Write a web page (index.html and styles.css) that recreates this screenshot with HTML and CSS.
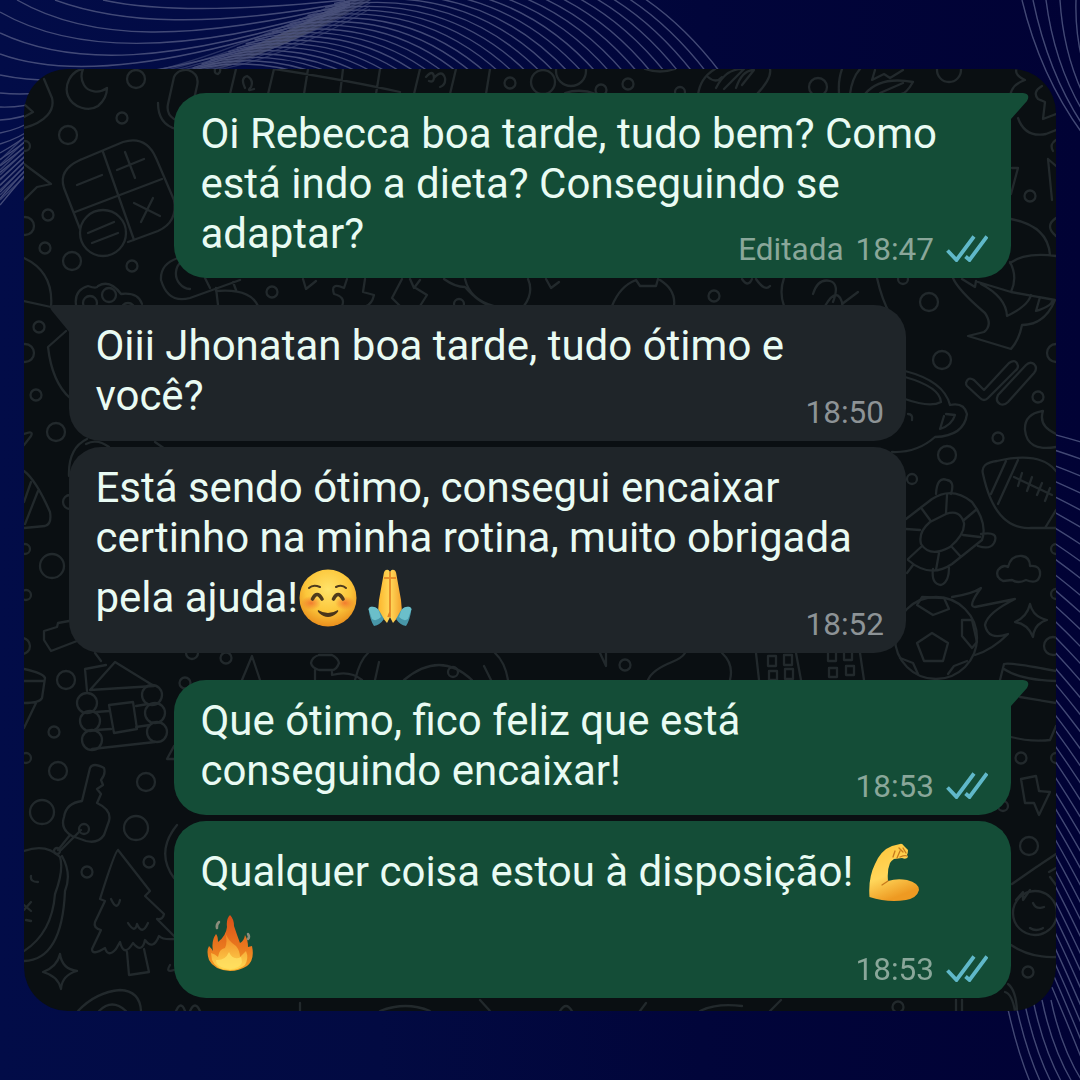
FILE: index.html
```html
<!DOCTYPE html>
<html lang="pt-BR">
<head>
<meta charset="utf-8">
<title>Conversa</title>
<link rel="stylesheet" href="styles.css">
</head>
<body>
<svg class="waves" viewBox="0 0 1080 1080" aria-hidden="true">
  <defs>
    <linearGradient id="band" x1="0" y1="1" x2="1" y2="0"><stop offset="0" stop-color="#5c6072" stop-opacity=".25"/><stop offset=".5" stop-color="#6b6f78" stop-opacity=".6"/><stop offset="1" stop-color="#6b6f78" stop-opacity=".25"/></linearGradient>
  </defs>
  <path d="M190 71L215 71Q300 42 375 -2L350 -2Q275 40 190 71Z" fill="url(#band)"/>
  <g id="wave-lines" class="wave-lines"></g>
</svg>

<main class="chat">
  <svg class="doodles" viewBox="24 69 1032 942" aria-hidden="true">
    <!-- top left: moon, clip, tag, calculator -->
    <path d="M83 69C70 71 64 86 68 96C73 108 89 112 98 106C104 101 107 94 107 88C99 94 88 92 84 85C81 80 81 74 83 69ZM44 79L52 98C55 110 46 122 24 128M24 104L33 112L24 117"/>
    <circle cx="136" cy="79" r="9"/><circle cx="122" cy="118" r="5.5"/><circle cx="68" cy="135" r="9"/><circle cx="25" cy="146" r="5"/><circle cx="48" cy="215" r="5.5"/><circle cx="25" cy="226" r="9"/><circle cx="45" cy="248" r="5.5"/><circle cx="72" cy="261" r="9"/><circle cx="132" cy="266" r="5.5"/>
    <path d="M174 77Q178 69 188 70Q200 74 197 86L191 113Q186 124 174 119Q166 114 168 104L174 77M158 103Q158 124 176 129M24 164L51 184L37 187L24 200"/>
    <path d="M80 160L123 142Q146 135 156 158L174 200Q178 222 158 231L128 242M80 160Q58 170 64 188L80 229M103 152L134 240M75 212L162 179M125 152L135 178M117 170L144 159M77 185L102 175M134 203L160 216M153 198L141 222M88 233L114 222M92 243L118 233"/><circle cx="103" cy="233" r="23"/>
    <!-- calendar strip -->
    <path d="M236 69L230 94M274 69L268 94M308 69L304 94M343 69L340 94M380 69L376 94M420 69L414 94M456 69L450 94M490 69L486 94M275 69C320 76 360 83 400 92M215 69Q214 74 218 74Q221 72 220 69"/>
    <path d="M245 88Q240 78 247 76Q254 80 251 87Q246 92 254 89M426 77Q433 69 434 77Q434 83 429 81M434 78Q442 69 445 78Q446 85 440 87"/>
    <circle cx="510" cy="83" r="5.5"/><circle cx="543" cy="82" r="12"/><circle cx="571" cy="71" r="15"/><circle cx="628" cy="84" r="5.5"/><circle cx="601" cy="90" r="5.5"/><circle cx="680" cy="92" r="5"/>
    <path d="M565 93Q580 88 596 94M645 69Q660 74 675 69M698 95Q700 78 715 69M708 77Q716 84 722 77M716 88Q726 68 744 69L724 89M736 88Q742 70 754 70L742 85M757 94Q772 78 770 69"/>
    <circle cx="818" cy="87" r="9"/><circle cx="949" cy="70" r="12"/><path d="M839 93Q838 80 842 69M850 94Q852 78 860 69M865 94Q880 76 913 82Q906 94 901 94M875 70L872 80L884 74L890 78L903 70M880 93L903 83"/>
    <path d="M1010 96Q1012 84 1025 80Q1012 74 1018 66M1018 118Q1025 138 1046 134L1056 130M1042 86Q1032 92 1038 99L1045 102L1043 119L1056 114"/>
    <!-- right upper: dolphin -->
    <path d="M1012 168L1018 168L1011 194M1048 159L1056 166M1048 159L1052 200M1056 140Q1049 144 1053 151M1056 218Q1044 226 1056 236"/><circle cx="1030" cy="196" r="5.5"/>
    <path d="M1011 219Q1048 226 1050 255M1010 263Q1025 252 1056 256M1010 262Q1018 277 1011 292L978 282M953 278Q958 290 985 313Q993 325 984 332L968 336L1011 349Q1019 340 1022 325Q1045 325 1055 300L1011 292M962 279L975 287L976 281M981 284Q1006 297 1007 316Q1028 306 1031 295M1040 297L1036 311Q1052 306 1052 301"/>
    <!-- strip under the first message -->
    <path d="M24 258Q54 272 51 307L24 301M76 305Q74 290 88 286Q97 289 98 286Q110 279 121 294Q138 292 142 304"/><circle cx="90" cy="303" r="7"/><circle cx="109" cy="295" r="7"/><circle cx="128" cy="310" r="7"/>
    <path d="M178 258Q160 264 161 280Q168 304 190 298L240 280M205 278L210 288M193 258A13 13 0 1 0 190 289M216 288L218 305M216 291Q250 288 258 306M233 282L236 290M303 279L306 289L316 281M347 279L344 288Q330 282 334 294Q346 297 342 306M365 279L363 292L374 295Q372 304 366 306M402 279L392 298L400 306M414 287L427 295L420 306M410 279L414 288L420 280M444 279Q455 287 465 287Q480 304 492 306M528 279Q534 292 524 306M546 279L551 288L559 282M494 306Q470 300 465 279M494 306M612 306Q620 286 636 280M636 280L640 286H656L658 279M660 280Q676 290 674 306"/><circle cx="272" cy="292" r="5.5"/><circle cx="459" cy="304" r="5"/><circle cx="714" cy="296" r="5.5"/><circle cx="929" cy="302" r="9"/><circle cx="903" cy="279" r="5"/>
    <path d="M742 279Q748 288 752 279M756 279Q765 292 770 286M784 278Q779 292 784 306M813 294Q818 278 830 281Q840 284 833 302M825 306Q838 284 843 306M858 292L842 304M877 278Q882 300 890 314"/>
    <!-- right column -->
    <circle cx="942" cy="360" r="9"/><circle cx="1056" cy="353" r="9"/><circle cx="1038" cy="397" r="5.5"/><circle cx="998" cy="438" r="5.5"/><circle cx="947" cy="455" r="9"/><circle cx="912" cy="479" r="5"/><circle cx="1056" cy="549" r="5"/><circle cx="1056" cy="594" r="5"/><circle cx="1053" cy="646" r="9"/>
    <path d="M966 383Q968 376 974 380L984 390L1009 363Q1016 358 1018 366Q1018 369 1015 371L988 398Q984 402 980 398L967 386Q966 385 966 383M1026 365L998 395Q995 401 1000 404Q1004 406 1008 402L1034 373Q1038 368 1034 364Q1030 361 1026 365"/>
    <path d="M905 371Q944 381 950 405Q964 402 967 414Q964 436 935 437Q917 453 892 452M905 377Q940 387 941 402Q930 408 905 399M946 414L955 415Q952 425 940 429L944 416M908 414Q913 414 912 420"/>
    <path d="M1043 411Q1024 414 1025 430Q1027 452 1056 447M1043 411Q1038 426 1056 434"/>
    <path d="M983 474Q980 463 997 461Q1040 451 1056 471M983 474Q995 530 1031 528H1056M1006 461L991 494M1018 460L998 504M1014 477L1052 495M1022 473L1018 486M1032 477L1027 491M1042 483L1037 495M1050 488L1045 501M1056 510L1045 528"/>
    <!-- turtle -->
    <path d="M906 519L932 499Q952 486 972 502Q988 523 982 540L952 564Q930 579 908 560M946 514Q960 509 964 523Q965 534 950 547Q930 558 921 544Q918 532 930 522L946 514M946 513L947 495M964 520L977 509M963 535L980 537M952 547L961 557M939 553L936 570M921 547L908 559M920 530L906 529M930 520L922 509M936 494Q937 476 947 480Q955 481 951 494M981 534Q1000 531 994 543Q990 550 978 546M933 569Q931 584 941 585Q949 582 949 568M907 573L913 565"/>
    <path d="M1003 581Q995 577 998 570Q1003 564 1008 567Q1011 555 1022 556Q1030 557 1030 566Q1041 565 1040 575Q1038 585 1026 580Q1018 584 1012 580Z"/>
    <!-- soccer ball with flames -->
    <circle cx="936" cy="638" r="41"/><path d="M932 633L948 643L943 661H924L917 643ZM917 605L922 597L944 598L949 609L933 615ZM962 620H972L977 642L972 648L962 636ZM900 658L913 663L918 674M948 674L954 666L967 661M952 597Q972 594 981 588Q967 607 975 607L1015 599Q987 613 985 625Q988 641 1008 634Q992 650 975 655"/>
    <path d="M1030 604Q1033 617 1047 620Q1034 624 1033 637Q1028 624 1015 622Q1027 617 1030 604M1000 680L1004 664Q1010 662 1056 671M1004 669Q1020 680 1056 681M1020 697L1056 703M1011 737Q1030 742 1050 740L1056 726"/>
    <!-- left column -->
    <circle cx="39" cy="327" r="5.5"/><circle cx="25" cy="353" r="9"/><circle cx="36" cy="395" r="5.5"/><circle cx="56" cy="432" r="9"/><circle cx="25" cy="549" r="5"/><circle cx="52" cy="566" r="12"/><circle cx="26" cy="595" r="5"/><circle cx="22" cy="646" r="8"/><circle cx="70" cy="502" r="7"/>
    <path d="M66 331L48 347Q52 382 70 398M24 434Q34 430 31 436L24 445M24 471Q36 480 50 512Q52 524 45 526L24 528M31 482L24 502M38 491L25 524M69 476Q68 448 87 439M86 444Q97 438 109 447M155 442L165 449M69 621L58 623L57 627L44 631L44 640L51 651L77 641M95 653L101 661"/>
    <!-- cabin -->
    <path d="M87 691L85 669L106 665M90 690L115 662L154 686ZM96 712L109 711M96 730L111 729M136 706L148 704M136 727L150 725M92 749L155 742M109 705L133 702L137 729L114 733Z"/><circle cx="87" cy="703" r="10"/><circle cx="90" cy="721" r="10"/><circle cx="92" cy="740" r="10"/><circle cx="152" cy="695" r="10"/><circle cx="155" cy="713" r="10"/><circle cx="157" cy="732" r="10"/>
    <circle cx="66" cy="680" r="9"/><circle cx="54" cy="732" r="5.5"/><circle cx="58" cy="771" r="9"/><circle cx="146" cy="782" r="9"/><circle cx="42" cy="812" r="12"/><circle cx="136" cy="828" r="12"/><circle cx="87" cy="872" r="5.5"/><circle cx="149" cy="862" r="5.5"/><circle cx="26" cy="758" r="5"/>
    <path d="M24 669Q43 673 45 678L42 698Q40 703 24 703M24 681H44M36 703L24 728"/>
    <!-- key and tag -->
    <path d="M82 801L90 768Q93 762 104 768Q106 774 101 780L103 785L97 789L101 794L97 803Q112 810 109 821L104 835Q98 844 86 841L72 836Q60 829 64 817Q66 803 82 801M81 830L61 850M70 835L58 850M24 851Q46 843 60 857Q64 870 55 894Q52 933 24 951M62 856Q72 874 65 891Q62 960 24 961M31 876Q30 882 38 882M24 910L31 902M26 920L31 921M24 905L31 911"/><circle cx="84" cy="829" r="5"/><circle cx="57" cy="851" r="3"/>
    <!-- pine tree -->
    <path d="M118 850Q115 851 100 899L105 901L95 922Q93 928 101 930L92 949Q92 956 105 948Q108 958 116 949L120 942Q124 958 133 943Q142 954 145 940Q153 951 159 936Q163 940 174 939M118 850L150 891L145 896L164 914Q163 920 157 919L174 936M127 952L129 975L149 972L144 949M111 899Q117 912 120 900M128 923Q135 934 137 924Q142 936 148 923"/>
    <path d="M60 954Q62 969 77 971Q62 975 61 989Q58 976 43 972Q57 967 60 954M78 1011Q96 992 120 990Q140 991 141 1011M99 1011Q112 998 126 1011M176 1011Q181 1000 185 1011M190 1011Q195 1000 200 1011M177 825Q155 852 174 878M174 746L167 759H174M170 965Q165 973 174 970"/>
    <!-- strip between third and fourth messages -->
    <circle cx="192" cy="653" r="6"/><circle cx="226" cy="658" r="5.5"/><circle cx="185" cy="683" r="5.5"/><path d="M242 680L252 656L260 680M319 655H332Q338 658 339 663Q336 671 331 670H319Q312 668 311 663Q312 657 319 655M315 670V680M332 670V675Q350 670 362 680M355 680Q360 660 368 653M379 662L375 680M404 680Q440 650 472 680M495 653Q505 662 508 680M484 666L491 680M600 653L606 666V653M648 680Q652 670 672 662Q682 658 685 653M722 653Q734 664 730 680M756 653L759 680M796 653L801 680M860 653L864 680M768 656H776V666H768ZM784 655H792V665H784ZM769 671H777V680H769ZM785 669H793V679H785ZM828 653V661H836V653M844 653V660H852V653M829 668H837V677H829ZM846 666H854V675H846Z"/><circle cx="453" cy="672" r="5"/><circle cx="625" cy="665" r="5.5"/>
    <!-- bottom right -->
    <circle cx="1021" cy="758" r="5.5"/><circle cx="1056" cy="758" r="5"/><circle cx="1029" cy="846" r="9"/><circle cx="1035" cy="913" r="22"/><circle cx="1028" cy="972" r="5.5"/><circle cx="898" cy="1007" r="5.5"/><circle cx="1003" cy="806" r="5"/>
    <path d="M1021 779L1036 776L1039 791L1050 792L1039 815L1034 803H1025ZM1012 884L1035 868L1056 854M1011 945Q1030 958 1056 957M1016 900L1023 892V900L1030 890M1033 903Q1036 910 1044 907M1030 928Q1036 932 1043 928M1056 868L1049 872M1056 885L1050 877M956 1000V1011M962 1000V1011M1005 992Q1012 994 1015 1011M1008 984Q1016 990 1017 1011"/>
    <path d="M770 1011L781 1000M700 1011Q716 1003 742 1006M640 1011L646 1003M560 1011Q566 1001 572 1011M480 1000L490 1011M380 1011Q406 1001 430 1011M300 1003V1011"/>
  </svg>

  <section class="thread">
    <article class="bubble sent tailed b1">
      <svg class="tail" viewBox="0 0 20 28"><path d="M0 0H13Q21 1 17 8L1 26L0 28Z"/></svg>
      <div class="text">
        <p><span>Oi Rebecca boa tarde, tudo bem? Como</span></p>
        <p><span>está indo a dieta? Conseguindo se</span></p>
        <p><span>adaptar?</span></p>
      </div>
      <div class="meta"><span>Editada</span><time>18:47</time><svg class="ticks" viewBox="0 0 42 27"><path d="M1.500 15.500L10.500 25L28 1.500M19.500 21.500L23.500 25L41 1.500"/></svg></div>
    </article>

    <article class="bubble received tailed b2">
      <svg class="tail" viewBox="0 0 20 28"><path d="M20 0H3Q-2 1 2 6L16 23Q19 27 20 28Z"/></svg>
      <div class="text">
        <p><span>Oiii Jhonatan boa tarde, tudo ótimo e</span></p>
        <p><span>você?</span></p>
      </div>
      <div class="meta"><time>18:50</time></div>
    </article>

    <article class="bubble received b3">
      <div class="text">
        <p><span>Está sendo ótimo, consegui encaixar</span></p>
        <p><span>certinho na minha rotina, muito obrigada</span></p>
        <p class="tall"><span>pela ajuda!</span>
          <svg class="emoji smile" viewBox="0 0 58 58">
            <defs><radialGradient id="face" cx=".5" cy=".35" r=".65"><stop offset="0" stop-color="#ffe36a"/><stop offset=".6" stop-color="#fcc73b"/><stop offset="1" stop-color="#ea8f1d"/></radialGradient><radialGradient id="blush"><stop offset="0" stop-color="#f0692b" stop-opacity=".8"/><stop offset="1" stop-color="#f0692b" stop-opacity="0"/></radialGradient></defs>
            <circle cx="29" cy="29" r="28.500" fill="url(#face)"/>
            <ellipse cx="12" cy="34" rx="10" ry="7" fill="url(#blush)"/><ellipse cx="46" cy="34" rx="10" ry="7" fill="url(#blush)"/>
            <g fill="none" stroke="#4f3b1d" stroke-linecap="round"><path d="M10 19Q14 15 21 18M37 18Q43 15 47 19" stroke-width="2"/><path d="M13.500 30Q18 21 23 30M34.500 30Q39 21 44 30" stroke-width="3.600"/></g>
            <path d="M19 41Q29 47 39 41Q40 42 38 44Q29 52 20 44Q18 42 19 41Z" fill="#4a351a"/>
          </svg>
          <svg class="emoji pray" viewBox="0 0 44 58">
            <defs><linearGradient id="hand"><stop offset="0" stop-color="#fcb52c"/><stop offset=".5" stop-color="#ffd95a"/><stop offset="1" stop-color="#f4a12b"/></linearGradient></defs>
            <path d="M20.500 1Q16 0 15.500 6L11 31L10 43L19 54L22 48L25 54L34 43L33 31L28.500 6Q28 0 23.500 1L22 3Z" fill="url(#hand)"/>
            <path d="M22 3V43L20 48M16 9L21 9M23 9H28M22 48V43" fill="none" stroke="#e27d20" stroke-width="1.600"/>
            <path d="M2 38Q9 37 12 43L16 50Q12 56 6 57Q2 51 .5 40ZM42 38Q35 37 32 43L28 50Q32 56 38 57Q42 51 43.500 40Z" fill="#4796a8"/><path d="M2 38Q8 37 11 42L13 48Q8 53 4 50L.5 40ZM42 38Q36 37 33 42L31 48Q36 53 40 50L43.500 40Z" fill="#6bbfca"/>
          </svg>
        </p>
      </div>
      <div class="meta"><time>18:52</time></div>
    </article>

    <article class="bubble sent tailed b4">
      <svg class="tail" viewBox="0 0 20 28"><path d="M0 0H13Q21 1 17 8L1 26L0 28Z"/></svg>
      <div class="text">
        <p><span>Que ótimo, fico feliz que está</span></p>
        <p><span>conseguindo encaixar!</span></p>
      </div>
      <div class="meta"><time>18:53</time><svg class="ticks" viewBox="0 0 42 27"><path d="M1.500 15.500L10.500 25L28 1.500M19.500 21.500L23.500 25L41 1.500"/></svg></div>
    </article>

    <article class="bubble sent b5">
      <div class="text">
        <p class="tall"><span>Qualquer coisa estou à disposição!</span>
          <svg class="emoji muscle" viewBox="0 0 52 58">
            <defs><linearGradient id="arm" x1="0" y1="0" x2=".35" y2="1"><stop offset="0" stop-color="#ffc438"/><stop offset=".6" stop-color="#ffd65a"/><stop offset="1" stop-color="#ee9a22"/></linearGradient></defs>
            <path d="M1.500 54Q0 35 7 21Q13 7 24 3L32 1Q34 0 36 3L40 7Q40 10 39 12L40 14Q38 17 34 15L26 16Q23 18 22 20Q19 27 20 38Q29 35 39 37Q51 40 51 47Q49 55 38 57Q20 60 1.500 54Z" fill="url(#arm)"/>
            <path d="M20 38Q17 40 14 42M27 8L25 14M31 5L35 9M32 8L29 15M35 5L38 10M32 14Q37 12 39 13" fill="none" stroke="#c77a1c" stroke-width="1.300" stroke-linecap="round"/>
          </svg>
        </p>
        <p class="tall second">
          <svg class="emoji fire" viewBox="0 0 48 58">
            <defs><linearGradient id="flame" x1="0" y1="0" x2="0" y2="1"><stop offset="0" stop-color="#d94f18"/><stop offset=".6" stop-color="#ea7a1e"/><stop offset="1" stop-color="#f6a326"/></linearGradient><linearGradient id="core" x1="0" y1="0" x2="0" y2="1"><stop offset="0" stop-color="#f08322"/><stop offset="1" stop-color="#ffd950"/></linearGradient></defs>
            <path d="M24 1Q28 5 28 12Q31 21 34 29Q38 27 39 21Q42 26 42 33L46 32Q49 46 41 52Q33 57 24 57Q8 56 3 46Q0 37 3 32Q6 35 7 37Q5 27 10 20Q12 22 12 28Q20 22 21 13Q20 5 24 1Z" fill="url(#flame)"/>
            <path d="M19 18Q22 27 30 32Q34 37 34 43L40 37Q43 44 39 51Q33 56 24 56Q10 56 6 46L5 39Q9 40 12 43Q13 35 19 34Q22 28 19 18Z" fill="url(#core)"/><path d="M23 38Q27 47 35 43Q39 53 25 55Q10 54 10 46Q19 47 23 38Z" fill="#ffe264" opacity=".75"/>
            <path d="M11 14Q10 11 13 8M42 20Q44 23 42 25" fill="none" stroke="#8b8d7c" stroke-width="2.500" stroke-linecap="round"/>
          </svg>
        </p>
      </div>
      <div class="meta"><time>18:53</time><svg class="ticks" viewBox="0 0 42 27"><path d="M1.500 15.500L10.500 25L28 1.500M19.500 21.500L23.500 25L41 1.500"/></svg></div>
    </article>
  </section>
</main>
<script src="waves.js"></script>
</body>
</html>
```
FILE: waves.js
```javascript
const group = document.getElementById('wave-lines');

function line(d, opacity) {
  const p = document.createElementNS('http://www.w3.org/2000/svg', 'path');
  p.setAttribute('d', d);
  if (opacity) p.setAttribute('opacity', opacity);
  group.appendChild(p);
}

// blend two cubic curves given as [x0,y0,x1,y1,x2,y2,x3,y3]
function blend(a, b, t) {
  const v = a.map((n, i) => (n + (b[i] - n) * t).toFixed(1));
  return `M${v[0]} ${v[1]}C${v[2]} ${v[3]} ${v[4]} ${v[5]} ${v[6]} ${v[7]}`;
}

// arcs fanning out over the top edge
const fan = 30;
for (let i = 0; i <= fan; i++) {
  line(blend([440, -45, 560, -60, 650, -20, 720, 72], [175, 76, 220, 58, 270, 62, 310, 76], i / fan));
}

// sagging lines in the top left corner
[
  'M103 0Q180 17 345 0', 'M55 0C120 24 210 28 350 2', 'M17 0C90 42 190 42 350 4',
  'M0 12C70 52 180 58 350 5', 'M0 33C70 66 170 66 345 8', 'M0 54C60 76 160 74 340 11',
  'M0 75Q90 94 260 45', 'M0 93Q30 96 60 90', 'M0 107Q20 108 50 100', 'M0 120Q20 119 40 110',
  'M0 133Q18 130 40 117', 'M0 144Q18 139 40 124'
].forEach(d => line(d));

for (let i = 0; i < 9; i++) {
  line(`M0 ${153 + i * 6.5}Q18 ${143 + i * 5} 40 ${126 + i * 4}`);
  line(`M0 ${160 + i * 5}L40 ${122 + i * 5}`, 0.8);
}
for (let i = 0; i < 8; i++) {
  line(`M${150 + i * 8} 72Q${230 + i * 7} ${54 + i} 370 ${-12 + i * 3}`, 0.6);
}

// top right corner
[
  'M1022 0Q1040 75 1082 133', 'M1033 0Q1048 72 1082 124', 'M1046 0Q1054 62 1082 110',
  'M1060 0Q1063 50 1082 92', 'M1076 0Q1075 30 1082 60'
].forEach(d => line(d));

// right edge
for (let y = 435; y < 1000; y += 15.6) {
  const slope = 0.27 + (y - 435) * 0.0037;
  line(`M1052 ${y - 4 * slope}Q1068 ${y + 12 * slope} 1084 ${y + 29 * slope}`);
}
for (let i = 0; i < 6; i++) {
  const x = 1007 + i * 9;
  line(`M${x - 1} 1000Q${x + 9} 1048 ${x + 23 + i * 1.5} 1082`);
}
```
FILE: styles.css
```css
* {
  box-sizing: border-box;
}

body {
  margin: 0;
  width: 1080px;
  height: 1080px;
  overflow: hidden;
  position: relative;
  padding: 69px 24px;
  background: linear-gradient(90deg, #020c48 0%, #020a42 35%, #01053a 65%, #010235 100%);
  font-family: Roboto, "Liberation Sans", sans-serif;
}

.waves {
  position: absolute;
  inset: 0;
  width: 1080px;
  height: 1080px;
}

.wave-lines {
  fill: none;
  stroke: #4f5680;
  stroke-width: 1.4;
  opacity: 0.85;
}

.chat {
  position: relative;
  width: 1032px;
  height: 942px;
  border-radius: 44px;
  overflow: hidden;
  background: #0a0f12;
}

.doodles {
  position: absolute;
  inset: 0;
  width: 100%;
  height: 100%;
  fill: none;
  stroke: #22292c;
  stroke-width: 2.3;
  stroke-linejoin: round;
  stroke-linecap: round;
}

.thread {
  position: relative;
  display: flex;
  flex-direction: column;
  gap: 6px;
  padding: 24px 45px 0;
}

.bubble {
  position: relative;
  display: grid;
  width: 837px;
  border-radius: 32px;
  color: #e9fbf3;
}

.sent {
  align-self: flex-end;
  background: #144d37;
  fill: #144d37;
}

.received {
  align-self: flex-start;
  background: #1f2529;
  fill: #1f2529;
}

.sent.tailed {
  border-top-right-radius: 0;
}

.received.tailed {
  border-top-left-radius: 0;
}

.tail {
  position: absolute;
  top: 0;
  width: 20px;
  height: 28px;
}

.sent .tail {
  left: calc(100% - 1px);
}

.received .tail {
  right: calc(100% - 1px);
}

.b1 { height: 185px; }
.b2 { height: 136px; margin-top: 21px; }
.b3 { height: 206px; }
.b4 { height: 135px; margin-top: 21px; }
.b5 { height: 177px; }

.text,
.meta {
  grid-area: 1 / 1;
}

.text {
  padding: 15.5px 0 0 26.4px;
}

.text p {
  display: flex;
  align-items: center;
  margin: 0;
  height: 50px;
  font-size: 42px;
  line-height: 50px;
  white-space: pre;
}

.text .tall {
  height: 70px;
}

.meta {
  place-self: end;
  display: flex;
  align-items: center;
  gap: 12px;
  padding: 0 23px 12px 0;
  font-size: 31.5px;
  line-height: 32px;
  color: #8aa79a;
}

.received .meta {
  padding-right: 22px;
  color: #8d9396;
}

.ticks {
  width: 42px;
  height: 27px;
  margin-bottom: 4px;
  fill: none;
  stroke: #60b8c9;
  stroke-width: 3.8;
}

.emoji {
  flex: none;
  height: 58px;
}

.smile { width: 58px; margin-left: 1px; }
.pray { width: 44px; margin-left: 11px; }
.muscle { width: 52px; margin-left: 15px; }
.fire { width: 48px; margin-left: 6px; margin-top: 3px; }
```
